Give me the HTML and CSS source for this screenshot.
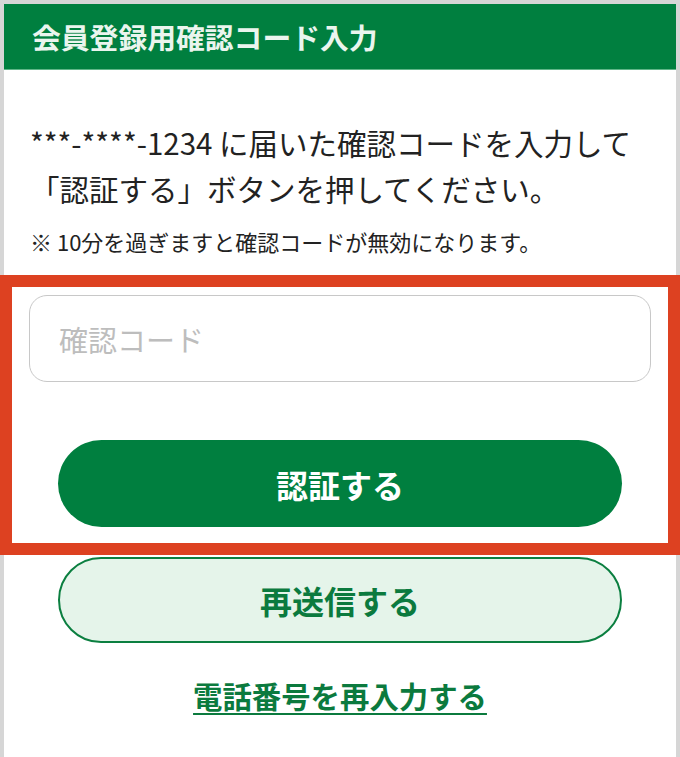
FILE: index.html
```html
<!DOCTYPE html>
<html lang="ja">
<head>
<meta charset="utf-8">
<title>会員登録用確認コード入力</title>
<link rel="stylesheet" href="styles.css">
</head>
<body>
<div class="card">
  <header class="head">会員登録用確認コード入力</header>
  <p class="lead">***-****-1234 に届いた確認コードを入力して<br>「認証する」ボタンを押してください。</p>
  <p class="note">※ 10分を過ぎますと確認コードが無効になります。</p>
  <section class="focus">
    <input class="code" type="text" placeholder="確認コード">
    <button class="btn btn-primary" type="button">認証する</button>
  </section>
  <button class="btn btn-secondary" type="button">再送信する</button>
  <div class="linkrow"><a class="relink" href="#">電話番号を再入力する</a></div>
</div>
</body>
</html>
```

FILE: styles.css
```css
html, body {
  margin: 0;
  padding: 0;
}
body {
  background: #d6d6d6;
  padding: 4px 4px 6px;
  font-family: "Noto Sans CJK JP", "Noto Sans", sans-serif;
  color: #222;
}
.card {
  background: #fff;
  display: flex;
  flex-direction: column;
  padding-bottom: 33px;
}
.head {
  background: #007f3f;
  color: #eaf5ee;
  font-weight: 700;
  font-size: 28.8px;
  height: 65px;
  line-height: 65px;
  padding-left: 28px;
  border-bottom: 1px solid #5fb688;
}
.lead {
  margin: 49px 0 0;
  padding: 0 26px;
  font-size: 29.5px;
  line-height: 46px;
}
.note {
  margin: 14px 0 0;
  padding: 0 26px;
  font-size: 22px;
  line-height: 32px;
}
.focus {
  margin: 18px -4px 0;
  border: 12px solid #dd4121;
  padding: 8px 17px 16px;
  display: flex;
  flex-direction: column;
  gap: 58px;
}
.code {
  box-sizing: border-box;
  height: 87px;
  width: 100%;
  border: 1.5px solid #c8c8c8;
  border-radius: 18px;
  padding: 0 29px;
  font-family: inherit;
  font-size: 29px;
  color: #222;
  background: #fff;
  outline: none;
}
.code::placeholder {
  color: #bdbdbd;
}
.btn {
  box-sizing: border-box;
  height: 87px;
  border-radius: 44px;
  font-family: inherit;
  font-weight: 700;
  font-size: 32px;
  cursor: pointer;
}
.btn-primary {
  margin: 0 29px;
  background: #007f3f;
  border: none;
  color: #fff;
}
.btn-secondary {
  margin: 2px 54px 0;
  height: 86px;
  background: #e5f4ea;
  border: 2px solid #0b7f40;
  color: #0b7a3e;
}
.linkrow {
  margin-top: 29px;
  text-align: center;
  line-height: 46px;
}
.relink {
  color: #0b7a3e;
  font-weight: 700;
  font-size: 29.4px;
  text-decoration: underline;
  text-decoration-thickness: 2px;
  text-underline-offset: 5px;
}
```
